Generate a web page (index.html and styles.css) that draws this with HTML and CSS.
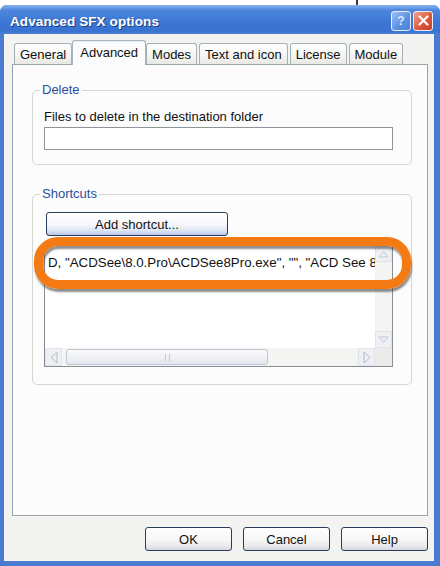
FILE: index.html
```
<!DOCTYPE html>
<html lang="en">

<head>
	<meta charset="UTF-8">
	<meta name="viewport" content="width=device-width, initial-scale=1.0">
	<title>Advanced SFX options</title>

	<link rel="stylesheet" href="styles.css">
</head>

<body>
	<div class="desk"><span class="desk-edge"></span></div>

	<div class="window">
		<div class="titlebar">
			<span class="title">Advanced SFX options</span>
			<div class="caption-btns">
				<span class="cbtn help">?</span>
				<span class="cbtn close">
					<svg width="11" height="11" viewBox="0 0 11 11">
						<path d="M1.5 1.5 L9.5 9.5 M9.5 1.5 L1.5 9.5" stroke="#fff" stroke-width="2.2" stroke-linecap="round"/>
					</svg>
				</span>
			</div>
		</div>

		<div class="client">
			<div class="tabs">
				<span class="tab">General</span>
				<span class="tab active">Advanced</span>
				<span class="tab">Modes</span>
				<span class="tab">Text and icon</span>
				<span class="tab">License</span>
				<span class="tab">Module</span>
			</div>

			<div class="panel">
				<fieldset class="group group-delete">
					<legend>Delete</legend>
					<label class="field-label">Files to delete in the destination folder</label>
					<div class="textbox"></div>
				</fieldset>

				<fieldset class="group group-shortcuts">
					<legend>Shortcuts</legend>
					<button type="button" class="btn btn-add">Add shortcut...</button>

					<div class="listbox-wrap">
						<div class="listbox">
							<div class="list-items">
								<div class="list-row">D, "ACDSee\8.0.Pro\ACDSee8Pro.exe", "", "ACD See 8</div>
							</div>
							<div class="vscroll">
								<span class="sb-btn">
									<svg width="11" height="8" viewBox="0 0 11 8"><path d="M1 7 L5.5 1.5 L10 7 Z" fill="none" stroke="#c3cad6" stroke-width="1"/></svg>
								</span>
								<span class="sb-track"></span>
								<span class="sb-btn">
									<svg width="11" height="8" viewBox="0 0 11 8"><path d="M1 1 L5.5 6.5 L10 1 Z" fill="none" stroke="#c3cad6" stroke-width="1"/></svg>
								</span>
							</div>
							<div class="hscroll">
								<span class="sb-btn">
									<svg width="8" height="13" viewBox="0 0 8 13"><path d="M7 1 L1 6.5 L7 12 Z" fill="none" stroke="#b4bcc9" stroke-width="1"/></svg>
								</span>
								<span class="sb-track">
									<span class="sb-thumb"><span class="grip"></span></span>
								</span>
								<span class="sb-btn">
									<svg width="8" height="13" viewBox="0 0 8 13"><path d="M1 1 L7 6.5 L1 12 Z" fill="none" stroke="#b4bcc9" stroke-width="1"/></svg>
								</span>
							</div>
							<div class="sb-corner"></div>
						</div>
						<!-- orange marker drawn over the first row -->
						<div class="marker"></div>
					</div>
				</fieldset>
			</div>

			<div class="actions">
				<button type="button" class="btn">OK</button>
				<button type="button" class="btn">Cancel</button>
				<button type="button" class="btn">Help</button>
			</div>
		</div>
	</div>
</body>

</html>
```

FILE: styles.css
```
body {
	margin: 0;
	background-color: #ffffff;
	font-family: "Liberation Sans", Arial, sans-serif;
	font-size: 13px;
	color: #111111;
	overflow: hidden;
}

.desk {
	height: 5px;
	padding-left: 356px;
}

.desk-edge {
	display: block;
	width: 2px;
	height: 5px;
	background: #3a3a3a;
}

.window {
	height: 561px;
	box-sizing: border-box;
	border-left: 4px solid #4a7bd0;
	border-right: 6px solid #4a7bd0;
	border-bottom: 5px solid #4a7bd0;
	border-radius: 7px 7px 0 0;
	background: #4a7bd0;
	display: flex;
	flex-direction: column;
	box-shadow: inset 1px 0 0 #1f3f8a;
}

.titlebar {
	height: 29px;
	margin: 0 -6px 0 -4px;
	padding: 0 7px 0 10px;
	display: flex;
	align-items: center;
	justify-content: space-between;
	border-radius: 7px 7px 0 0;
	background: linear-gradient(#8ab2ee, #4d86dc 18%, #3c76d4 60%, #3a72d0 90%, #4a7fd6);
}

.title {
	color: #ffffff;
	font-weight: bold;
	font-size: 13.5px;
	letter-spacing: 0.1px;
	text-shadow: 1px 1px 0 #1d3f88;
	padding-top: 3px;
}

.caption-btns {
	display: flex;
	gap: 2px;
	padding-top: 2px;
}

.cbtn {
	width: 18px;
	height: 18px;
	border: 1px solid #e8eefa;
	border-radius: 3px;
	display: flex;
	align-items: center;
	justify-content: center;
	color: #ffffff;
	font-weight: bold;
	font-size: 12px;
}

.help {
	background: linear-gradient(135deg, #9cc0f4, #5a90e2 60%, #4c82d8);
	color: #dce8fb;
}

.close {
	background: linear-gradient(135deg, #f0a38e, #dc5a3c 55%, #c8402a);
}

.client {
	flex: 1;
	background: #f3f3f1;
	padding: 0 6px 0 8px;
	display: flex;
	flex-direction: column;
}

.tabs {
	height: 24px;
	margin-top: 6px;
	padding-left: 2px;
	display: flex;
	align-items: flex-end;
	gap: 2px;
	position: relative;
	z-index: 1;
}

.tab {
	height: 21px;
	line-height: 22px;
	padding: 0 5px;
	border: 1px solid #a4b0b8;
	border-bottom: none;
	border-radius: 3px 3px 0 0;
	background: linear-gradient(#ffffff, #f4f4f2 60%, #e8e8e4);
	box-sizing: border-box;
	white-space: nowrap;
}

.tab.active {
	height: 25px;
	line-height: 23px;
	margin: 0 -2px -1px;
	padding: 0 7px;
	background: #fcfcfc;
	border-color: #a8b4bc;
	box-shadow: inset 0 1px 0 #e6ecf2;
}

.panel {
	height: 452px;
	box-sizing: border-box;
	border: 1px solid #98a4ac;
	background: #fcfcfc;
	display: flex;
	flex-direction: column;
}

.group {
	border: 1px solid #d4d6cf;
	border-radius: 5px;
	margin: 0 15px 0 19px;
	padding: 11px 18px 14px 11px;
	min-width: 0;
}

.group legend {
	color: #2b4f9f;
	line-height: 16px;
	padding: 0 2px;
	margin-left: -4px;
}

.group-delete {
	margin-top: 17px;
}

.group-shortcuts {
	margin-top: 21px;
	padding-top: 10px;
	padding-bottom: 17px;
}

.field-label {
	display: block;
	line-height: 16px;
}

.textbox {
	margin-top: 2px;
	height: 23px;
	box-sizing: border-box;
	border: 1px solid #8e9498;
	background: #ffffff;
}

.btn {
	font-family: "Liberation Sans", Arial, sans-serif;
	font-size: 13px;
	color: #111111;
	height: 24px;
	border: 1px solid #2a3c5a;
	border-radius: 3px;
	background: linear-gradient(#ffffff, #f6f6f6 55%, #e6e6ea 85%, #d4d6e0);
	padding: 0;
}

.btn-add {
	display: block;
	width: 182px;
	margin-left: 2px;
	background: linear-gradient(#ffffff, #f4f6fa 55%, #dde4f2 80%, #b8c8ea);
}

.listbox-wrap {
	position: relative;
	margin-top: 8px;
}

.listbox {
	height: 123px;
	box-sizing: border-box;
	border: 1px solid #8a8e92;
	background: #ffffff;
	display: grid;
	grid-template-columns: 1fr 17px;
	grid-template-rows: 1fr 18px;
	overflow: hidden;
}

.list-items {
	overflow: hidden;
	padding: 9px 0 0 3px;
}

.list-row {
	font-size: 13.3px;
	line-height: 17px;
	white-space: nowrap;
}

.vscroll {
	display: flex;
	flex-direction: column;
	background: #f4f4f2;
}

.hscroll {
	display: flex;
	background: #f4f4f2;
}

.sb-btn {
	width: 17px;
	height: 17px;
	flex: none;
	display: flex;
	align-items: center;
	justify-content: center;
	background: #eef0f3;
	border: 1px solid #e0e4ea;
	box-sizing: border-box;
}

.hscroll .sb-btn {
	height: 18px;
}

.sb-track {
	flex: 1;
	display: flex;
	align-items: center;
}

.sb-thumb {
	margin-left: 4px;
	width: 202px;
	height: 16px;
	box-sizing: border-box;
	border: 1px solid #bcc6d4;
	border-radius: 3px;
	background: linear-gradient(#fbfbfc, #eef0f4 60%, #e2e6ee);
	display: flex;
	align-items: center;
	justify-content: center;
}

.grip {
	width: 3px;
	height: 7px;
	border-left: 1px solid #c2c8d2;
	border-right: 1px solid #c2c8d2;
}

.sb-corner {
	background: #ebebea;
}

.marker {
	position: absolute;
	left: -10px;
	top: -7px;
	width: 377px;
	height: 52px;
	box-sizing: border-box;
	border: 9px solid #f47b14;
	border-radius: 24px;
	box-shadow: 1px 3px 2px rgba(50, 50, 50, 0.55), inset 1px 3px 2px rgba(50, 50, 50, 0.55);
	pointer-events: none;
}

.actions {
	display: flex;
	justify-content: flex-end;
	gap: 11px;
	margin-top: 11px;
}

.actions .btn {
	width: 87px;
}
```
